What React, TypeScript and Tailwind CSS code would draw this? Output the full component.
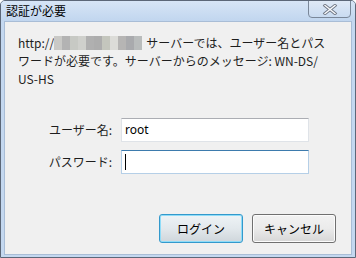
import React from 'react'

const mosaic = ['#c9c9c6', '#b3b3b3', '#c7c9c4', '#cfd0cc', '#b0b0b0', '#adadad', '#c4c6bd', '#dcdcd8', '#b6b5b4', '#a9aaad', '#b9bcbc']

const App = () => {
  return (
    <div className="w-[356px] h-[258px] flex flex-col border border-[#5c6778] bg-[#c4d8f0] px-[3px] pb-[2px] rounded-t-[5px] overflow-hidden"
      style={{ fontFamily: '"Noto Sans CJK JP", "Noto Sans", sans-serif' }}>
      {/* title bar */}
      <div className="h-[20px] flex items-start justify-between bg-gradient-to-b from-[#d7e5f6] to-[#c1d6ef] -mx-[3px] px-[3px]">
        <div className="pl-[2px] pt-[1px] text-[12px] leading-[18px] text-black">認証が必要</div>
        <div className="-mt-px mr-[1px] w-[43px] h-[18px] rounded-b-[4px] border border-[#7a8799] bg-gradient-to-b from-[#dfe9f6] to-[#c9dbf1] flex items-center justify-center">
          <svg width="16" height="11" viewBox="0 0 16 11">
            <path d="M3 1.5 L13 9.5 M13 1.5 L3 9.5" stroke="#6f7785" strokeWidth="3.2" strokeLinecap="square" />
            <path d="M3 1.5 L13 9.5 M13 1.5 L3 9.5" stroke="#fafbfd" strokeWidth="1.4" strokeLinecap="square" />
          </svg>
        </div>
      </div>

      {/* client */}
      <div className="flex-1 flex flex-col border border-[#a9bdd6] bg-[#f0f0f0] text-[12px] text-[#1e1e1e]">
        <p className="pl-[13px] pt-[12px] leading-[18px]">
          http://
          <span className="inline-flex align-[-2px] h-[14px] mr-[4px]">
            {mosaic.map((c, i) => (
              <span key={i} className="w-[8px] h-[14px]" style={{ backgroundColor: c }} />
            ))}
          </span>
          サーバーでは、ユーザー名とパス<br />
          ワードが必要です。サーバーからのメッセージ: WN-DS/<br />
          US-HS
        </p>

        <div className="mt-[30px] flex flex-col gap-[8px]">
          <div className="flex items-center">
            <div className="w-[116px] text-right pr-[9px]">ユーザー名:</div>
            <div className="w-[188px] h-[24px] border border-[#dfe3e8] border-t-[#abadb3] bg-white flex items-center pl-[3px] text-[12px] text-black"
              style={{ fontFamily: '"Noto Sans", sans-serif' }}>root</div>
          </div>
          <div className="flex items-center">
            <div className="w-[116px] text-right pr-[9px]">パスワード:</div>
            <div className="w-[188px] h-[24px] border border-[#b5cfe7] border-t-[#3d7bad] bg-white flex items-center pl-[3px]">
              <div className="w-px h-[16px] bg-black" />
            </div>
          </div>
        </div>

        <div className="mt-auto mb-[11px] flex justify-end gap-[9px] pr-[15px]">
          <button className="w-[84px] h-[29px] rounded-[3px] border border-[#3399cc] shadow-[inset_0_0_0_1px_#8fdcf8] bg-gradient-to-b from-[#eef3f6] via-[#e2e8ec] to-[#cfd6db] text-[12px] text-black">ログイン</button>
          <button className="w-[84px] h-[29px] rounded-[3px] border border-[#707070] shadow-[inset_0_0_0_1px_#fcfcfc] bg-gradient-to-b from-[#f2f2f2] via-[#ebebeb] to-[#d6d6d6] text-[12px] text-black">キャンセル</button>
        </div>
      </div>
    </div>
  )
}

export default App
